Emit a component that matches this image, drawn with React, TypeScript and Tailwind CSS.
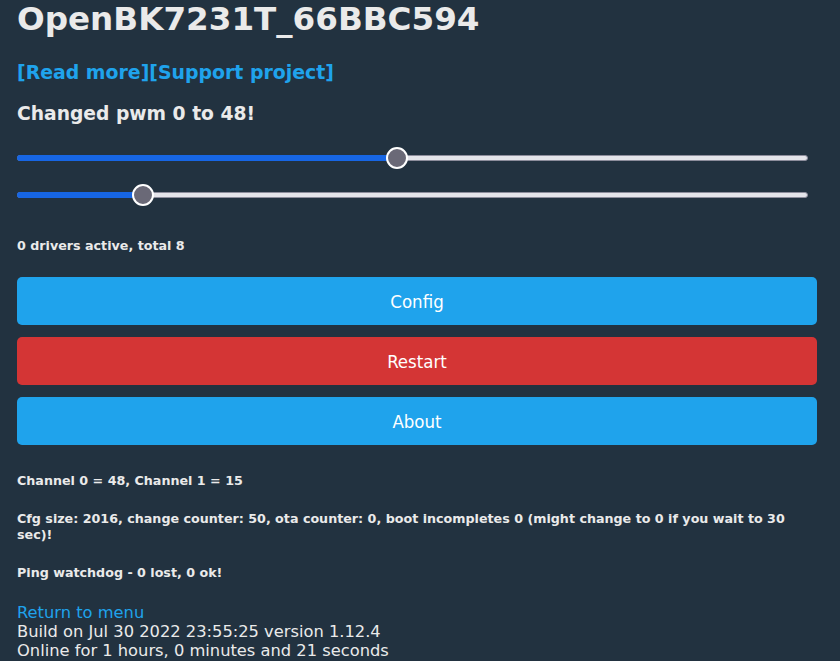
import React from 'react'

const channels = [48, 15]

function Slider({ value }: { value: number }) {
  // thumb travels 771px inside a 791px track
  const center = 10 + (value / 100) * 771
  return (
    <div className="relative h-[20px] w-[791px]">
      <div className="absolute left-0 right-0 top-[7px] h-[6px] rounded-full border border-[#8d8d9c] bg-[#e4e4ea]" />
      <div
        className="absolute left-0 top-[7px] h-[6px] rounded-full bg-[#1766e4]"
        style={{ width: center }}
      />
      <div
        className="absolute top-[-1px] h-[22px] w-[22px] rounded-full border-2 border-white bg-[#6a6977]"
        style={{ left: center - 11 }}
      />
    </div>
  )
}

function Btn({ label, red }: { label: string; red?: boolean }) {
  return (
    <button
      className={
        'flex h-[48px] w-[800px] items-center justify-center rounded-[5px] pt-[2px] text-[18.5px] text-white ' +
        (red ? 'bg-[#d43535]' : 'bg-[#1fa3ec]')
      }
    >
      <span className="font-['DejaVu_Sans_Condensed','Liberation_Sans',sans-serif]">{label}</span>
    </button>
  )
}

export default function App() {
  return (
    <div className="min-h-[661px] w-[840px] overflow-hidden bg-[#223240] pl-[17px] font-['DejaVu_Sans','Verdana',sans-serif] text-[#eaeaea]">
      <h1 className="m-0 text-[32.6px] font-bold leading-[38px]">OpenBK7231T_66BBC594</h1>

      <div className="mt-[23px] text-[18.9px] font-bold leading-[22px] text-[#1fa3ec]">
        <a href="#">[Read more]</a>
        <a href="#">[Support project]</a>
      </div>

      <h3 className="mt-[20px] text-[18.72px] font-bold leading-[22px]">Changed pwm 0 to 48!</h3>

      <div className="mt-[23px]">
        <Slider value={channels[0]} />
      </div>
      <div className="mt-[17px]">
        <Slider value={channels[1]} />
      </div>

      <h5 className="mt-[33px] text-[12.7px] font-bold leading-[16px]">0 drivers active, total 8</h5>

      <div className="mt-[23px] flex flex-col gap-[12px]">
        <Btn label="Config" />
        <Btn label="Restart" red />
        <Btn label="About" />
      </div>

      <div className="w-[800px] text-[12.7px] font-bold leading-[16px]">
        <h5 className="mt-[28px]">Channel 0 = 48, Channel 1 = 15</h5>
        <h5 className="mt-[22px]">
          Cfg size: 2016, change counter: 50, ota counter: 0, boot incompletes 0 (might change to 0 if you wait to 30 sec)!
        </h5>
        <h5 className="mt-[22px]">Ping watchdog - 0 lost, 0 ok!</h5>
      </div>

      <div className="mt-[21.5px] text-[16.3px] leading-[19px]">
        <a href="#" className="text-[#1fa3ec]">Return to menu</a>
        <div>Build on Jul 30 2022 23:55:25 version 1.12.4</div>
        <div>Online for 1 hours, 0 minutes and 21 seconds</div>
      </div>
    </div>
  )
}
